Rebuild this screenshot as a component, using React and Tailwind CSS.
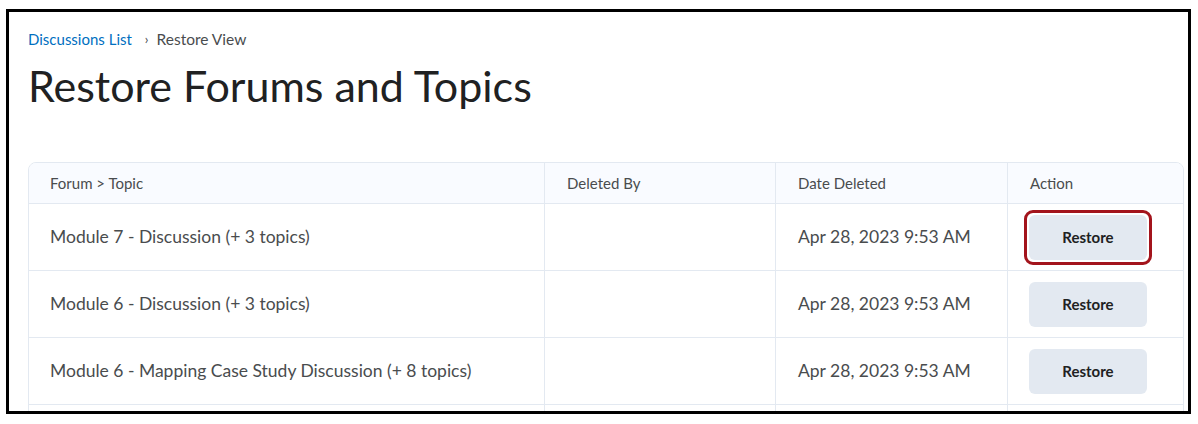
import React from 'react';

const rows = [
  { name: 'Module 7 - Discussion (+ 3 topics)', by: '', date: 'Apr 28, 2023 9:53 AM', highlight: true },
  { name: 'Module 6 - Discussion (+ 3 topics)', by: '', date: 'Apr 28, 2023 9:53 AM' },
  { name: 'Module 6 - Mapping Case Study Discussion (+ 8 topics)', by: '', date: 'Apr 28, 2023 9:53 AM' },
];

function RestoreButton({ highlight }) {
  const btn = (
    <button className="w-[118px] h-[45px] rounded-[6px] bg-[#e3e9f1] text-[15px] font-bold text-[#202122]">
      Restore
    </button>
  );
  if (!highlight) return btn;
  return (
    <div className="-m-[5px] p-[2px] border-[3px] border-[#a3141c] rounded-[9px]">{btn}</div>
  );
}

export default function App() {
  return (
    <div className="w-[1198px] h-[424px] bg-white pt-[9px] pl-[6px] font-['Lato',sans-serif]">
      <div className="w-[1185px] h-[405px] border-[3px] border-black overflow-hidden pl-[19px]">
        {/* Breadcrumb */}
        <div className="flex items-center mt-[19px] text-[15px] leading-[17px]">
          <span className="text-[#006fbf]">Discussions List</span>
          <span className="ml-[13px] mr-[8px] text-[#494c4e] text-[13px]">›</span>
          <span className="text-[#494c4e] text-[15.5px]">Restore View</span>
        </div>
        <h1 className="mt-[12px] text-[43px] leading-[52px] text-[#202122] font-normal">
          Restore Forums and Topics
        </h1>

        {/* Table */}
        <div className="mt-[50px] w-[1156px] border border-[#e3e9f1] rounded-t-[8px] overflow-hidden">
          <div className="flex h-[41px] bg-[#f9fbff] text-[15px] text-[#494c4e] border-b border-[#e3e9f1]">
            <div className="w-[515px] flex items-center px-[21px]">Forum &gt; Topic</div>
            <div className="w-[231px] flex items-center px-[22px] border-l border-[#e3e9f1]">Deleted By</div>
            <div className="w-[232px] flex items-center px-[22px] border-l border-[#e3e9f1]">Date Deleted</div>
            <div className="flex-1 flex items-center px-[22px] border-l border-[#e3e9f1]">Action</div>
          </div>
          {rows.map((r, i) => (
            <div key={i} className="flex h-[67px] text-[17.5px] text-[#494c4e] border-b border-[#e3e9f1]">
              <div className="w-[515px] flex items-center px-[21px]">{r.name}</div>
              <div className="w-[231px] flex items-center px-[22px] border-l border-[#e3e9f1]">{r.by}</div>
              <div className="w-[232px] flex items-center px-[22px] border-l border-[#e3e9f1]">{r.date}</div>
              <div className="flex-1 flex items-center px-[21px] border-l border-[#e3e9f1]">
                <RestoreButton highlight={r.highlight} />
              </div>
            </div>
          ))}
          {/* next row, cut off by the frame */}
          <div className="flex h-[67px]">
            <div className="w-[515px]" />
            <div className="w-[231px] border-l border-[#e3e9f1]" />
            <div className="w-[232px] border-l border-[#e3e9f1]" />
            <div className="flex-1 border-l border-[#e3e9f1]" />
          </div>
        </div>
      </div>
    </div>
  );
}
